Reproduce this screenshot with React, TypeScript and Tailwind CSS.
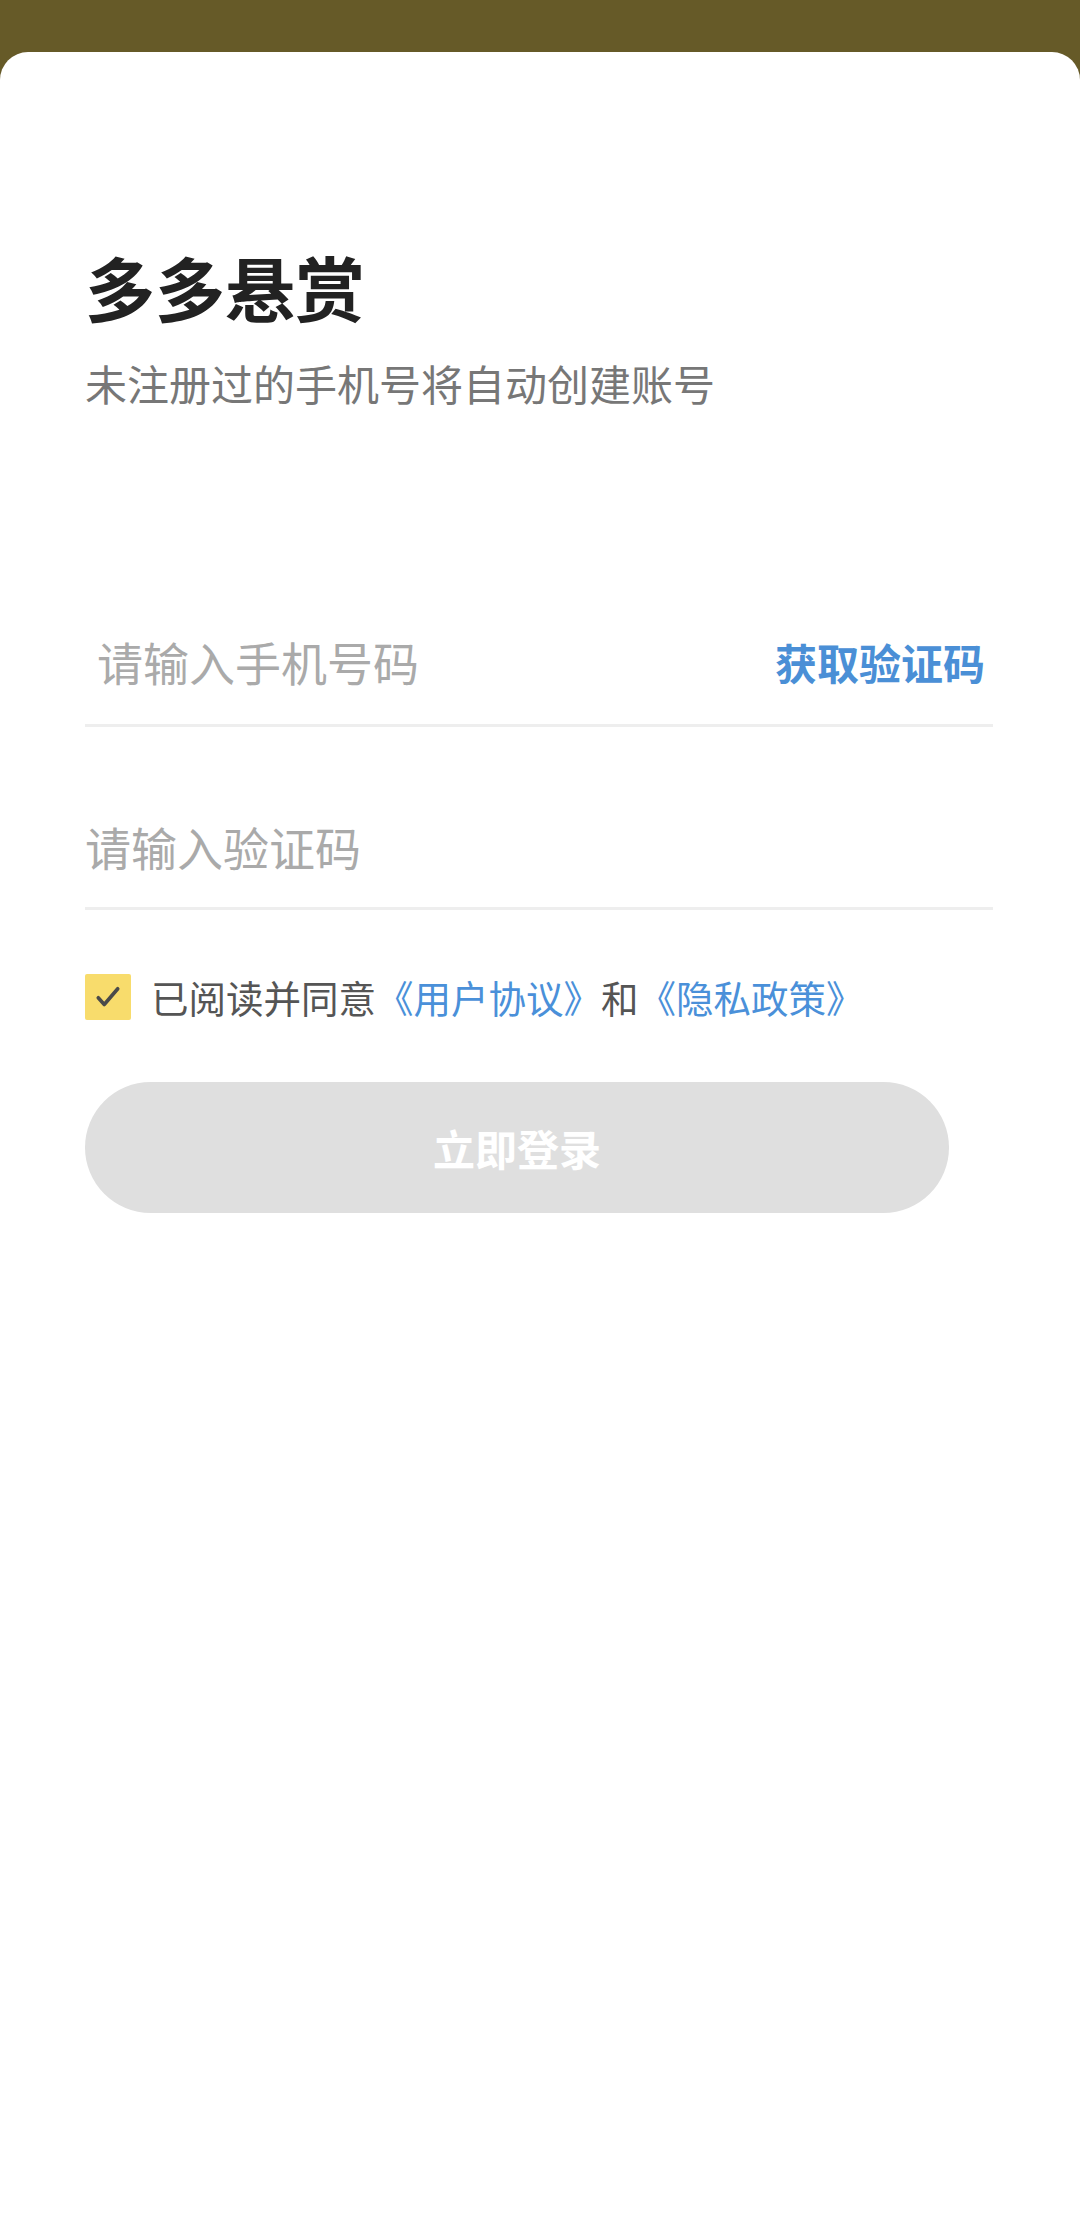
import { useState } from 'react';

const FONT = "font-['Noto_Sans_CJK_SC','Noto_Sans',sans-serif]";

export default function App() {
  const [phone, setPhone] = useState('');
  const [code, setCode] = useState('');
  const [agreed, setAgreed] = useState(true);

  return (
    <div className={`min-h-[2232px] w-[1080px] bg-[#665a28] pt-[52px] ${FONT}`}>
      {/* Sheet */}
      <div className="min-h-[2180px] rounded-t-[28px] bg-white pl-[85px] pr-[87px] pt-[200px]">
        {/* Heading */}
        <h1 className="text-[70px] font-bold leading-[70px] text-[#222222]">多多悬赏</h1>
        <p className="mt-[38px] text-[42px] leading-[46px] text-[#777777]">未注册过的手机号将自动创建账号</p>

        {/* Phone */}
        <div className="mt-[201px] flex h-[120px] items-center border-b-[3px] border-[#eeeeee] pb-[8px] pl-3 pr-[8px]">
          <input
            value={phone}
            onChange={e => setPhone(e.target.value)}
            placeholder="请输入手机号码"
            className="min-w-0 flex-1 bg-transparent text-[46px] text-[#333] outline-none placeholder:text-[#aaaaaa]"
          />
          <button className="text-[42px] font-bold text-[#4a8fd6]">获取验证码</button>
        </div>

        {/* Code */}
        <div className="mt-[63px] flex h-[120px] items-center border-b-[3px] border-[#eeeeee] pb-[5px]">
          <input
            value={code}
            onChange={e => setCode(e.target.value)}
            placeholder="请输入验证码"
            className="min-w-0 flex-1 bg-transparent text-[46px] text-[#333] outline-none placeholder:text-[#aaaaaa]"
          />
        </div>

        {/* Agreement */}
        <div className="mt-[64px] flex items-center gap-[20px]">
          <button
            onClick={() => setAgreed(!agreed)}
            className={`flex h-[46px] w-[46px] items-center justify-center rounded-[2px] ${agreed ? 'bg-[#f8dc6c]' : 'border-2 border-[#cccccc] bg-white'}`}
          >
            {agreed && (
              <svg viewBox="0 0 24 24" className="h-[36px] w-[36px]" fill="none" stroke="#4a4a4a" strokeWidth="2.4" strokeLinecap="round" strokeLinejoin="round">
                <path d="M5.5 12.5l4 4.5L18.5 6.5" />
              </svg>
            )}
          </button>
          <p className="text-[37.5px] leading-[46px] text-[#555555]">
            已阅读并同意<span className="text-[#4a90d9]">《用户协议》</span>和<span className="text-[#4a90d9]">《隐私政策》</span>
          </p>
        </div>

        {/* Submit */}
        <button className="mt-[62px] flex h-[131px] w-[864px] items-center justify-center rounded-full bg-[#dfdfdf] text-[42px] font-bold text-white">
          立即登录
        </button>
      </div>
    </div>
  );
}
